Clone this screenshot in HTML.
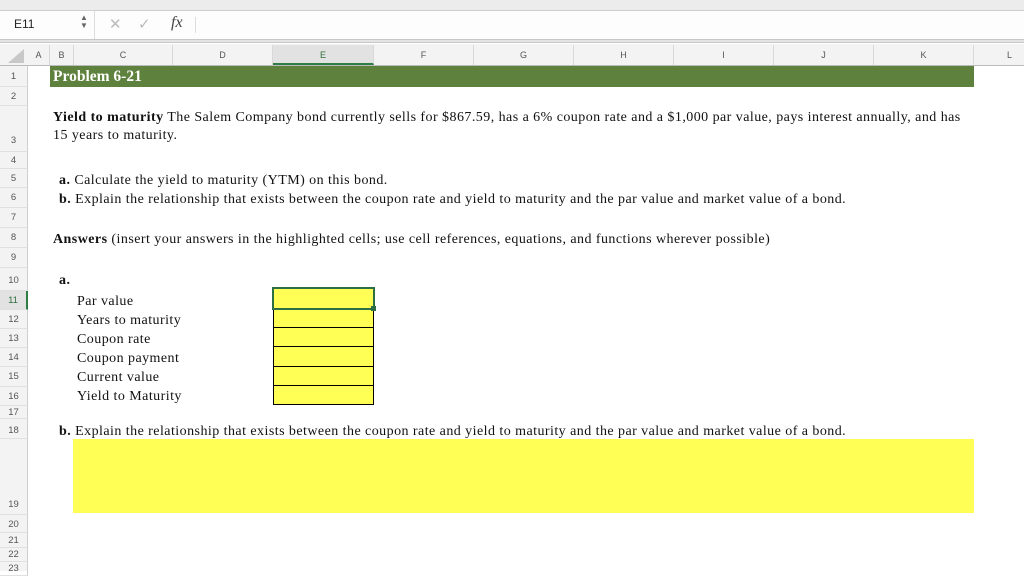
<!DOCTYPE html>
<html><head><style>
*{margin:0;padding:0;box-sizing:border-box}
body{width:1024px;height:571px;position:relative;overflow:hidden;background:#fff;font-family:"Liberation Sans",sans-serif}
.a{position:absolute}
.s{font-family:"Liberation Serif",serif;font-size:14px;letter-spacing:0.45px;color:#111;white-space:nowrap;position:absolute;margin-top:2px}
.ch{position:absolute;top:45px;height:20px;font-size:9px;color:#555;text-align:center;line-height:20px;border-right:1px solid #d8d8d8}
.rh{position:absolute;left:0;width:28px;font-size:9.5px;color:#555;text-align:center;border-bottom:1px solid #e0e0e0;border-right:1px solid #cfcfcf}
.y{position:absolute;background:#ffff55}
</style></head><body>
<div class="a" style="left:0;top:0;width:1024px;height:11px;background:#ececec;border-bottom:1px solid #cfcfcf"></div>
<div class="a" style="left:0;top:11px;width:1024px;height:28px;background:#fdfdfd"></div>
<div class="a" style="left:0;top:39px;width:1024px;height:4px;background:#e4e4e4;border-top:1px solid #c8c8c8;border-bottom:1px solid #c8c8c8"></div>
<div class="a" style="left:14px;top:17px;font-size:12px;color:#222">E11</div>
<div class="a" style="left:80px;top:14px;font-size:8px;color:#666;line-height:8px">▲<br>▼</div>
<div class="a" style="left:94px;top:11px;width:1px;height:28px;background:#ddd"></div>
<div class="a" style="left:109px;top:15px;font-size:15px;color:#bbb">✕</div>
<div class="a" style="left:138px;top:15px;font-size:15px;color:#bbb">✓</div>
<div class="a" style="left:171px;top:14px;font-family:'Liberation Serif',serif;font-style:italic;font-size:16px;color:#444">fx</div>
<div class="a" style="left:195px;top:17px;width:1px;height:16px;background:#ddd"></div>
<div class="a" style="left:0;top:44px;width:1024px;height:22px;background:#f3f3f3;border-bottom:1px solid #bbb"></div>
<div class="a" style="left:8px;top:49px;width:0;height:0;border-left:16px solid transparent;border-bottom:14px solid #c8c8c8"></div>
<div class="ch" style="left:28px;width:22px">A</div>
<div class="ch" style="left:50px;width:24px">B</div>
<div class="ch" style="left:74px;width:99px">C</div>
<div class="ch" style="left:173px;width:100px">D</div>
<div class="ch" style="left:273px;width:101px;background:#e2e2e2;color:#2e6e3e;border-bottom:2px solid #2e7d45">E</div>
<div class="ch" style="left:374px;width:100px">F</div>
<div class="ch" style="left:474px;width:100px">G</div>
<div class="ch" style="left:574px;width:100px">H</div>
<div class="ch" style="left:674px;width:100px">I</div>
<div class="ch" style="left:774px;width:100px">J</div>
<div class="ch" style="left:874px;width:100px">K</div>
<div class="ch" style="left:974px;width:72px">L</div>
<div class="a" style="left:0;top:66px;width:28px;height:505px;background:#f3f3f3"></div>
<div class="rh" style="top:66px;height:21px;line-height:21px">1</div>
<div class="rh" style="top:87px;height:19px;line-height:19px">2</div>
<div class="rh" style="top:106px;height:46px;line-height:70px">3</div>
<div class="rh" style="top:152px;height:17px;line-height:17px">4</div>
<div class="rh" style="top:169px;height:19px;line-height:19px">5</div>
<div class="rh" style="top:188px;height:20px;line-height:20px">6</div>
<div class="rh" style="top:208px;height:20px;line-height:20px">7</div>
<div class="rh" style="top:228px;height:20px;line-height:20px">8</div>
<div class="rh" style="top:248px;height:20px;line-height:20px">9</div>
<div class="rh" style="top:268px;height:23px;line-height:26px">10</div>
<div class="rh" style="top:291px;height:19px;line-height:19px;background:#e2e2e2;color:#2e6e3e;border-right:2px solid #2e7d45">11</div>
<div class="rh" style="top:310px;height:19px;line-height:19px">12</div>
<div class="rh" style="top:329px;height:19px;line-height:19px">13</div>
<div class="rh" style="top:348px;height:19px;line-height:19px">14</div>
<div class="rh" style="top:367px;height:20px;line-height:20px">15</div>
<div class="rh" style="top:387px;height:19px;line-height:19px">16</div>
<div class="rh" style="top:406px;height:13px;line-height:13px">17</div>
<div class="rh" style="top:419px;height:20px;line-height:24px">18</div>
<div class="rh" style="top:439px;height:76px;line-height:132px">19</div>
<div class="rh" style="top:515px;height:18px;line-height:20px">20</div>
<div class="rh" style="top:533px;height:15px;line-height:15px">21</div>
<div class="rh" style="top:548px;height:14px;line-height:14px">22</div>
<div class="rh" style="top:562px;height:14px;line-height:14px">23</div>
<div class="a" style="left:50px;top:66px;width:924px;height:21px;background:#5e813e"></div>
<div class="s" style="left:53px;top:66px;color:#fff;font-weight:bold;font-size:15.5px;letter-spacing:0">Problem 6-21</div>
<div class="s" style="left:53px;top:108px"><b>Yield to maturity</b> The Salem Company bond currently sells for $867.59, has a 6% coupon rate and a $1,000 par value, pays interest annually, and has</div>
<div class="s" style="left:53px;top:126px">15 years to maturity.</div>
<div class="s" style="left:59px;top:171px"><b>a.</b> Calculate the yield to maturity (YTM) on this bond.</div>
<div class="s" style="left:59px;top:190px"><b>b.</b> Explain the relationship that exists between the coupon rate and yield to maturity and the par value and market value of a bond.</div>
<div class="s" style="left:53px;top:230px"><b>Answers</b> (insert your answers in the highlighted cells; use cell references, equations, and functions wherever possible)</div>
<div class="s" style="left:59px;top:271px"><b>a.</b></div>
<div class="s" style="left:77px;top:292px">Par value</div>
<div class="s" style="left:77px;top:311px">Years to maturity</div>
<div class="s" style="left:77px;top:330px">Coupon rate</div>
<div class="s" style="left:77px;top:349px">Coupon payment</div>
<div class="s" style="left:77px;top:368px">Current value</div>
<div class="s" style="left:77px;top:387px">Yield to Maturity</div>
<div class="y" style="left:273px;top:288px;width:101px;height:117px;border:1px solid #000"></div>
<div class="a" style="left:273px;top:327px;width:101px;height:1px;background:#000"></div>
<div class="a" style="left:273px;top:346px;width:101px;height:1px;background:#000"></div>
<div class="a" style="left:273px;top:366px;width:101px;height:1px;background:#000"></div>
<div class="a" style="left:273px;top:385px;width:101px;height:1px;background:#000"></div>
<div class="a" style="left:273px;top:308px;width:101px;height:1px;background:#000"></div>
<div class="a" style="left:272px;top:287px;width:103px;height:23px;border:2px solid #2e6e45"></div>
<div class="a" style="left:371px;top:306px;width:5px;height:5px;background:#2e6e45"></div>
<div class="s" style="left:59px;top:422px"><b>b.</b> Explain the relationship that exists between the coupon rate and yield to maturity and the par value and market value of a bond.</div>
<div class="y" style="left:73px;top:439px;width:901px;height:74px"></div>
</body></html>
